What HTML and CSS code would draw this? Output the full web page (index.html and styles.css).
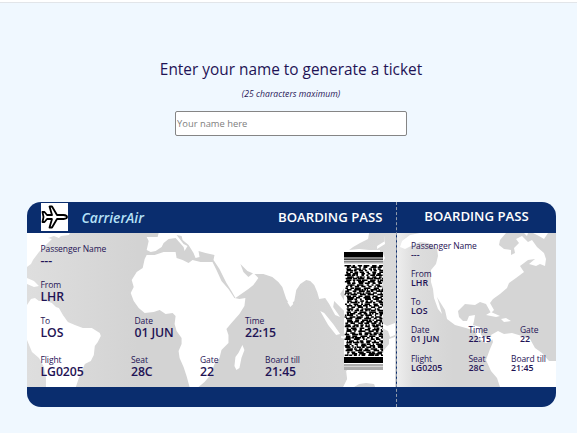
FILE: index.html
```html
<!DOCTYPE html>
<html lang="en">
<head>
<meta charset="utf-8">
<title>Boarding pass generator</title>
<link rel="stylesheet" href="styles.css">
</head>
<body>
<div class="topbar"></div>
<main>
  <form class="entry">
    <label class="title" for="name"><span>Enter your name to generate a ticket</span></label>
    <p class="hint"><span>(25 characters maximum)</span></p>
    <input class="name" id="name" type="text" maxlength="25" placeholder="Your name here">
  </form>
  <section class="ticket">
    <div class="main">
      <header class="head">
        <svg class="plane" viewBox="0 0 27 28"><rect width="27" height="28" fill="#fff"/><path d="M1.500 9H3.500L6 12H11L8.500 3.500H11L16 12H22.500Q26 12.300 26 14Q26 15.700 22.500 16H16L11 24.500H8.500L11 16H6L3.500 19H1.500L2.500 14Z" fill="#fff" stroke="#000" stroke-width="1.8" stroke-linejoin="round"/></svg>
        <span class="carrier">CarrierAir</span>
        <span class="pass">BOARDING PASS</span>
      </header>
      <div class="body">
        <svg class="map" viewBox="27 233 370 154" preserveAspectRatio="none">
          <defs><linearGradient id="sea"><stop offset="0" stop-color="#dedede"/><stop offset=".3" stop-color="#d3d3d3"/><stop offset=".7" stop-color="#d3d3d3"/><stop offset="1" stop-color="#d9d9d9"/></linearGradient></defs>
          <rect x="27" y="233" width="370" height="154" fill="url(#sea)"/>
          <g class="land">
            <path d="M27 233H70L69 235L61 236L59 238L54 236L48 238L52 239L45 246L39 252L33 260L31 264L27 267ZM27 278L34 281L39 286L34 287L27 284Z"/>
            <path d="M27 305L31 299L35 298L39 301L44 300L52 303L56 307L59 308L63 315L68 322L75 325L83 328L92 328L100 333L101 336L98 342L95 346L94 355L91 361L85 364L82 371L79 378L76 387H46L46 378L44 367L39 358L32 352L27 340Z"/>
            <path d="M147 255L155 255L164 252L173 252L176 252L177 258L183 260L189 263L193 260L201 262L213 262L217 270L222 281L229 289L235 298L240 299L246 298L245 306L240 314L232 323L227 329L229 335L229 343L222 350L220 358L215 364L211 375L205 382L199 387H190L187 376L184 367L180 358L179 351L182 344L182 338L177 331L175 324L176 316L173 313L166 314L160 310L154 312L145 313L139 308L134 301L131 293L134 287L132 280L137 272L143 268L145 259Z"/>
            <path d="M147 250L149 241L147 237L158 237L159 233H370L369 239L361 243L354 247L350 250L360 249L370 250L381 250V265L374 272L360 280L347 285L341 294L347 304L345 311L339 305L335 301L334 307L341 317L336 315L330 304L326 298L320 299L318 292L315 285L311 281L307 280L301 284L297 290L295 301L291 305L287 299L283 287L279 282L273 277L264 274L255 274L248 271L241 264L244 272L249 277L254 273L259 278L254 285L249 289L236 298L232 291L227 283L220 269L214 260L215 255L206 253L199 251L200 257L196 258L194 253L189 245L183 240L182 236L177 235L184 244L188 246L185 251L184 247L176 238L169 239L164 243L162 247L156 251L151 252Z"/>
            <path d="M235 366L236 357L239 353L243 345L245 350L242 358L240 368L237 370ZM288 302L292 300L294 304L291 307ZM321 311L325 313L334 324L341 334L337 335L329 325ZM342 336L360 340L359 342L342 338ZM353 312L365 309L367 324L361 330L353 325ZM383 323L388 326L396 323V335L391 337L389 331L383 328ZM396 337V387H376L375 384L367 383L360 384L355 387H344L348 379L347 371L359 360L376 356L382 360L385 350L390 344V339ZM385 235L386 241L378 246L378 249L386 244ZM384 254L386 258L383 263Z"/>
          </g>
        </svg>
        <div class="fields">
          <div class="row"><div class="field"><span class="k">Passenger Name</span><b>---</b></div></div>
          <div class="row"><div class="field"><span class="k">From</span><b>LHR</b></div></div>
          <div class="row three"><div class="field"><span class="k">To</span><b>LOS</b></div><div class="field"><span class="k">Date</span><b>01 JUN</b></div><div class="field"><span class="k">Time</span><b>22:15</b></div></div>
          <div class="row four"><div class="field"><span class="k">Flight</span><b>LG0205</b></div><div class="field"><span class="k">Seat</span><b>28C</b></div><div class="field"><span class="k">Gate</span><b>22</b></div><div class="field"><span class="k">Board till</span><b>21:45</b></div></div>
        </div>
        <svg class="barcode" viewBox="0 0 39 118"><rect width="39" height="118" fill="#fff"/><path d="M0 0H39V5.500H0ZM0 6.500H39V7.700H0ZM0 105H39V111H0Z"/><path d="M0 8.700H39V9.700H0ZM0 10.600H39V11.300H0ZM0 112.500H39V113.500H0ZM0 114.700H39V115.400H0ZM0 116.600H39V117.400H0Z" opacity=".65"/><path id="cells"/></svg>
      </div>
      <footer class="foot"></footer>
    </div>
    <div class="stub">
      <header class="head"><span class="pass">BOARDING PASS</span></header>
      <div class="body">
        <svg class="map" viewBox="397 233 159 154" preserveAspectRatio="none">
          <defs><linearGradient id="sea2"><stop offset="0" stop-color="#eee"/><stop offset=".1" stop-color="#dedede"/><stop offset=".35" stop-color="#d5d5d5"/><stop offset="1" stop-color="#d5d5d5"/></linearGradient></defs>
          <rect x="397" y="233" width="159" height="154" fill="url(#sea2)"/>
          <g class="land">
            <path d="M397 253L405 249L400 247L402 241L410 235L420 233H506L500 240L499 245L504 249L511 250L511 255L515 253L514 248L519 243L516 239L522 236L528 242L532 240L537 247L544 253L546 259L545 266L540 264L536 266L529 264L535 259L528 260L520 266L524 272L516 278L509 283L507 288L500 294L493 299L490 303L494 310L491 313L486 304L480 302L475 305L465 304L458 311L459 317L463 321L467 321L469 316L475 315L474 321L473 325L480 327L481 335L487 338L493 336L492 340L486 343L478 338L475 331L466 328L455 325L447 319L445 310L440 302L437 297L440 307L442 314L438 309L434 298L433 289L431 282L431 270L436 264L438 256L437 248L428 243L420 242L411 246Z"/>
            <path d="M491 335L498 331L504 334L512 333L522 336L530 339L535 348L542 353L549 361H556V387H500L497 378L491 371L486 360L490 349L493 342ZM486 315L491 312L500 316L496 317ZM501 319L506 318L511 321L504 322ZM524 233H528L527 236ZM533 233H548L544 239L539 236Z"/>
          </g>
        </svg>
        <div class="fields">
          <div class="row"><div class="field"><span class="k">Passenger Name</span><b>---</b></div></div>
          <div class="row"><div class="field"><span class="k">From</span><b>LHR</b></div></div>
          <div class="row"><div class="field"><span class="k">To</span><b>LOS</b></div></div>
          <div class="row three"><div class="field"><span class="k">Date</span><b>01 JUN</b></div><div class="field"><span class="k">Time</span><b>22:15</b></div><div class="field"><span class="k">Gate</span><b>22</b></div></div>
          <div class="row four"><div class="field"><span class="k">Flight</span><b>LG0205</b></div><div class="field"><span class="k">Seat</span><b>28C</b></div><div class="field"><span class="k">Board till</span><b>21:45</b></div></div>
        </div>
      </div>
      <footer class="foot"></footer>
    </div>
  </section>
</main>
<script src="barcode.js"></script>
</body>
</html>
```
FILE: styles.css
```css
* { box-sizing: border-box; }
body { margin: 0; height: 433px; overflow: hidden; background: #f0f8ff; color: #1f1355; font-family: "Open Sans", "Noto Sans", sans-serif; }
.topbar { height: 3px; background: #fff; border-bottom: 1px solid #e2e5e9; }
.entry { display: flex; flex-direction: column; align-items: center; padding-top: 56px; margin-left: 5px; }
.title { font-size: 15.4px; line-height: 22px; letter-spacing: 0; white-space: nowrap; }
.hint { margin: 7px 0 0; font-size: 8.6px; line-height: 12px; font-style: italic; letter-spacing: .04px; }
.name { width: 232px; height: 25px; margin-top: 11px; padding: 0 1px; border: 1px solid #858585; border-radius: 2px; background: #fff; font: 9.4px "Open Sans", sans-serif; letter-spacing: 0; }
.name::placeholder { color: #808080; }
.ticket { display: flex; width: 529px; height: 205px; margin: 66px 0 0 27px; border-radius: 14px; overflow: hidden; background: #0a2d6e; }
.main, .stub { display: flex; flex-direction: column; }
.main { width: 370px; border-right: 1px dashed #929bab; }
.stub { width: 159px; }
.head { height: 31px; display: flex; align-items: center; color: #fff; }
.main .head { padding: 0 13.5px 1px 13.5px; }
.stub .head { justify-content: center; padding-bottom: 4px; }
.plane { width: 27px; height: 28px; }
.carrier { margin-left: 14px; color: #b5e1f7; font-size: 13.9px; font-style: italic; font-weight: 600; }
.pass { font-size: 13.2px; font-weight: 600; }
.main .pass { margin-left: auto; }
.body { display: grid; height: 154px; }
.map { grid-area: 1 / 1; width: 100%; height: 154px; }
.land { fill: #fff; }
.fields { grid-area: 1 / 1; display: grid; align-content: start; z-index: 1; }
.main .fields { padding: 10px 0 0 13.5px; grid-template-rows: 35.5px 36px 39.5px 24px; }
.stub .fields { padding: 7.6px 0 0 14px; grid-template-rows: repeat(5, 28.3px); }
.row { display: grid; align-items: start; }
.main .three { grid-template-columns: 94px 110.5px 1fr; }
.main .four { grid-template-columns: 90.5px 69px 65px 1fr; }
.stub .three { grid-template-columns: 57.5px 51.5px 1fr; }
.stub .four { grid-template-columns: 57.5px 42.5px 1fr; }
.field { display: flex; flex-direction: column; white-space: nowrap; }
.k { font-size: 8.5px; line-height: 12px; letter-spacing: -.08px; }
.field b { font-size: 12.3px; line-height: 12px; font-weight: 600; letter-spacing: -.1px; }
.stub .k { line-height: 10px; }
.stub .field b { font-size: 8.8px; line-height: 9px; letter-spacing: 0; }
.barcode { grid-area: 1 / 1; width: 39px; height: 118px; margin: 19px 13px 0 0; justify-self: end; z-index: 1; }
.foot { height: 20px; }
```
FILE: barcode.js
```javascript
// Stacked barcode cells, generated from a fixed seed.
let seed = 7;
const random = () => (seed = (seed * 16807) % 2147483647) / 2147483647;
let d = "";
for (let y = 13; y < 103; y += 1.6) {
  for (let x = 0; x < 39;) {
    const gap = 0.5 + random() * 3;
    const w = Math.min(1.2 + random() * 6, 39 - x - gap);
    if (w > 0) d += `M${x + gap} ${y}h${w}v1.5h${-w}z`;
    x += gap + Math.max(w, 1);
  }
}
document.getElementById("cells").setAttribute("d", d);
```
